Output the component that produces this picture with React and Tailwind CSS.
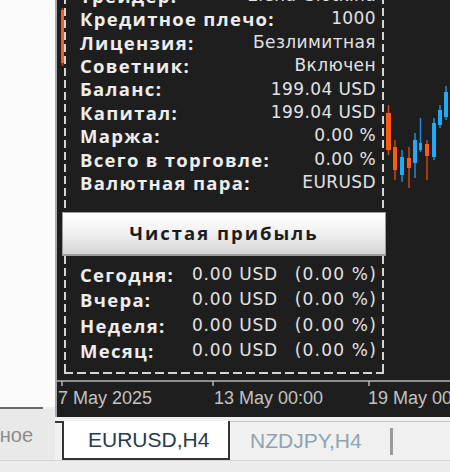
import React from 'react';

const info = [
  ['Трейдер:', 'Elena Glotkina'],
  ['Кредитное плечо:', '1000'],
  ['Лицензия:', 'Безлимитная'],
  ['Советник:', 'Включен'],
  ['Баланс:', '199.04 USD'],
  ['Капитал:', '199.04 USD'],
  ['Маржа:', '0.00 %'],
  ['Всего в торговле:', '0.00 %'],
  ['Валютная пара:', 'EURUSD'],
];

const profit = ['Сегодня:', 'Вчера:', 'Неделя:', 'Месяц:'];

// candles in chart coordinates: x, width, body top/bottom, wick top/bottom, up?
const candles = [
  [4, 3, 10, 63, 8, 66, false],
  [329, 5, 113, 150, 105, 155, false],
  [336, 4, 147, 170, 140, 180, false],
  [343, 4, 157, 175, 150, 182, true],
  [350, 4, 158, 168, 147, 188, false],
  [356, 4, 140, 163, 133, 178, true],
  [362, 3, 143, 150, 118, 152, true],
  [368, 4, 144, 156, 140, 180, false],
  [375, 4, 123, 157, 118, 160, true],
  [381, 4, 110, 125, 105, 128, true],
  [387, 4, 92, 117, 86, 120, true],
];

function DashV() {
  return <div className="w-[2px] shrink-0 bg-[image:repeating-linear-gradient(to_bottom,#d4d4d4_0px,#d4d4d4_8px,transparent_8px,transparent_12px)]" />;
}

function DashH() {
  return <div className="h-[2px] bg-[image:repeating-linear-gradient(to_right,#d4d4d4_0px,#d4d4d4_9px,transparent_9px,transparent_13px)]" />;
}

const labelCls = "font-['Open_Sans',sans-serif] font-bold text-[18.5px] tracking-[1.3px] text-[#ededed] whitespace-nowrap";
const valueCls = "font-['DejaVu_Sans',sans-serif] text-[17px] tracking-[0.4px] text-[#e2e2e2] whitespace-nowrap";

function ChartDrawing() {
  return (
    <svg className="absolute inset-0" width="393" height="417">
      {candles.map(([x, w, bt, bb, wt, wb, up], i) => (
        <g key={i}>
          <line x1={x + w / 2} x2={x + w / 2} y1={wt} y2={wb} stroke={up ? '#1b8fd6' : '#c9480f'} strokeWidth="1.5" />
          <rect x={x} y={bt} width={w} height={bb - bt} fill={up ? '#22aaf5' : '#ff5a12'} />
        </g>
      ))}
      <line x1="0" x2="393" y1="381" y2="381" stroke="#b4b4b4" strokeWidth="1.5" />
      <line x1="5" x2="5" y1="381" y2="386" stroke="#b4b4b4" strokeWidth="1.5" />
      <line x1="156" x2="156" y1="381" y2="386" stroke="#b4b4b4" strokeWidth="1.5" />
      <line x1="312" x2="312" y1="381" y2="386" stroke="#b4b4b4" strokeWidth="1.5" />
    </svg>
  );
}

export default function App() {
  return (
    <div className="flex h-[472px] w-[450px] overflow-hidden bg-[#f0f0f0]">
      {/* left strip with cut-off tab */}
      <div className="flex w-[55px] shrink-0 flex-col">
        <div className="flex-1 bg-[#fbfbfb]" />
        <div className="h-[2px] w-[43px] bg-[#6a6a6a]" />
        <div className="flex h-[51px] items-center justify-end overflow-hidden bg-[#e9e9e9] pr-[22px] font-['Liberation_Sans',sans-serif] text-[20px] text-[#8c8c8c] whitespace-nowrap">
          Основное
        </div>
        <div className="h-[12px] border-t border-[#d4d4d4] bg-[#ececec]" />
      </div>

      <div className="flex flex-1 flex-col">
        {/* chart */}
        <div className="relative h-[417px] overflow-hidden border-l-2 border-[#a9a9a9] bg-[#1e1e1e]">
          <ChartDrawing />
          <div className="relative flex h-[380px] overflow-hidden pl-[7px]">
            <div className="-mt-[16px] flex w-[320px] flex-col self-start bg-[#1e1e1e]">
              <div className="flex">
                <DashV />
                <div className="flex flex-1 flex-col pb-[17px] pl-[14px] pr-[6px]">
                  {info.map(([k, v]) => (
                    <div key={k} className="flex h-[23.4px] items-center justify-between">
                      <span className={labelCls}>{k}</span>
                      <span className={valueCls}>{v}</span>
                    </div>
                  ))}
                </div>
                <DashV />
              </div>

              <div className="-mx-[2px] flex h-[44px] items-center justify-center border border-b-2 border-[#9c9c9c] bg-[linear-gradient(to_bottom,#ffffff,#f2f2f2_45%,#d5d5d5)] font-['Open_Sans',sans-serif] text-[18.5px] font-bold tracking-[2px] text-[#1c1c1c]">
                Чистая прибыль
              </div>

              <div className="flex">
                <DashV />
                <div className="flex flex-1 flex-col pb-[8px] pl-[14px] pr-[5px] pt-[6.5px]">
                  {profit.map((k) => (
                    <div key={k} className="flex h-[25.4px] items-center">
                      <span className={`${labelCls} w-[112px]`}>{k}</span>
                      <span className={`${valueCls} tracking-[0.8px]`}>0.00 USD</span>
                      <span className={`${valueCls} ml-auto tracking-[1.2px]`}>(0.00 %)</span>
                    </div>
                  ))}
                </div>
                <DashV />
              </div>
              <DashH />
            </div>
          </div>
          <div className="relative mt-[5px] flex font-['Liberation_Sans',sans-serif] text-[18px] text-[#c2c2c2] whitespace-nowrap">
            <span className="w-[157px] pl-[1px]">7 May 2025</span>
            <span className="w-[154px]">13 May 00:00</span>
            <span>19 May 00:00</span>
          </div>
        </div>

        {/* tab bar */}
        <div className="flex h-[55px] flex-col">
          <div className="flex h-[43px] pt-[4px]">
            <div className="w-[7px] border-t-2 border-[#3a3a3a]" />
            <div className="flex w-[168px] items-center border-x-2 border-b-2 border-[#333333] bg-white pl-[24px] font-['Liberation_Sans',sans-serif] text-[21px] text-[#283a4e]">
              EURUSD,H4
            </div>
            <div className="flex flex-1 items-center border-t border-[#c9c9c9] pl-[20px] font-['Liberation_Sans',sans-serif] text-[21px] text-[#8ea4b4]">
              <span className="w-[140px]">NZDJPY,H4</span>
              <div className="h-[27px] w-[3px] bg-[#9a9a9a]" />
            </div>
          </div>
          <div className="flex-1 border-t border-[#d6d6d6] bg-[#ececec]" />
        </div>
      </div>
    </div>
  );
}
